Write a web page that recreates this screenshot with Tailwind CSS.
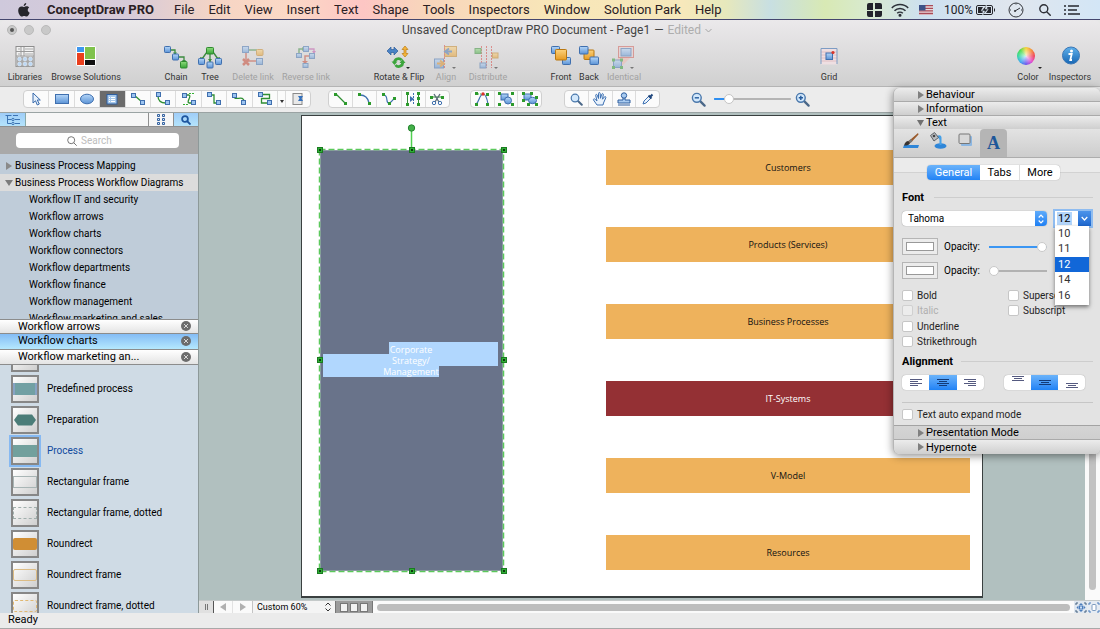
<!DOCTYPE html>
<html lang="en">
<head>
    <meta charset="UTF-8">
    <meta name="viewport" content="width=device-width, initial-scale=1.0">
    <title>ConceptDraw PRO</title>
    <script src="https://cdn.jsdelivr.net/npm/@tailwindcss/browser@4"></script>
</head>
<body class="h-screen flex flex-col overflow-hidden bg-[#e8e8e8] font-['Roboto',sans-serif] text-black">

    <!-- Shared gradients and symbols -->
    <svg class="w-0 h-0 shrink-0" aria-hidden="true">
        <defs>
            <linearGradient id="blue" x1="0" y1="0" x2="0" y2="1"><stop offset="0" stop-color="#b5d6f8"/><stop offset="1" stop-color="#5b93d6"/></linearGradient>
            <linearGradient id="orange" x1="0" y1="0" x2="0" y2="1"><stop offset="0" stop-color="#fcd27c"/><stop offset="1" stop-color="#e69a22"/></linearGradient>
            <linearGradient id="green" x1="0" y1="0" x2="0" y2="1"><stop offset="0" stop-color="#8edc7c"/><stop offset="1" stop-color="#36a336"/></linearGradient>
            <linearGradient id="info" x1="0" y1="0" x2="0" y2="1"><stop offset="0" stop-color="#5fb0ea"/><stop offset="1" stop-color="#1766b4"/></linearGradient>
        </defs>
        <symbol id="node" viewBox="0 0 5 5"><rect x=".5" y=".5" width="4" height="4" fill="#9cc4f0" stroke="#3f6fae"/></symbol>
        <symbol id="dot" viewBox="0 0 4 4"><rect width="4" height="4" fill="#2c9a2c"/></symbol>
        <symbol id="close" viewBox="0 0 10 10"><circle cx="5" cy="5" r="5" fill="#6c6c6c"/><path d="M3 3l4 4M7 3L3 7" stroke="#d6d6d6" stroke-width="1"/></symbol>
        <symbol id="magnifier" viewBox="0 0 16 16"><path d="M9.500 9.500l5 5" stroke="#4a6788" stroke-width="2.400" stroke-linecap="round"/><circle cx="6.200" cy="6.200" r="4.700" fill="#d3e8fb" stroke="#4a78ac" stroke-width="1.500"/></symbol>
    </svg>

    <!-- Menu bar -->
    <header class="h-5 shrink-0 flex items-center pl-[18px] pr-5 text-[13px] leading-5 border-b border-[#44466e] bg-[linear-gradient(90deg,#cfc9dc_0%,#d8cbd8_12%,#f6d5c4_20%,#fbd9c6_26%,#fdc6c4_33%,#f8d4bc_38%,#f8e6b8_50%,#f7e8bb_62%,#e6e8bc_66%,#c8dfe2_70%,#d8e9b4_75%,#d8ead0_79%,#cde0f0_84%,#e0e6ee_92%,#d3e6f6_100%)]">
        <svg class="w-3 h-[14px] mr-[17px]" viewBox="0 0 12 14" fill="#26262c"><path d="M8.200 0c.1 1.600-1 3-2.500 3.100C5.500 1.700 6.700.200 8.200 0zM6.200 4c.6 0 1.300-.7 2.500-.7 1 0 1.900.5 2.500 1.300-2.100 1.300-1.800 4.200.5 5.100-.5 1.500-1.800 3.900-3.200 3.900-.9 0-1.300-.6-2.300-.6s-1.500.6-2.300.6C2.100 13.600.2 10.300.2 7.500c0-2.600 1.600-4.100 3.300-4.100 1.200 0 2 .6 2.700.6z"/></svg>
        <nav class="flex gap-[14px] text-[#2a2024]">
            <a href="#" class="font-bold mr-[6px]">ConceptDraw PRO</a>
            <a href="#">File</a>
            <a href="#">Edit</a>
            <a href="#">View</a>
            <a href="#">Insert</a>
            <a href="#">Text</a>
            <a href="#">Shape</a>
            <a href="#">Tools</a>
            <a href="#">Inspectors</a>
            <a href="#">Window</a>
            <a href="#">Solution Park</a>
            <a href="#">Help</a>
        </nav>
        <div class="ml-auto flex items-center text-[#222228] text-xs">
            <svg class="w-[15px] h-[14px] mr-[9px]" viewBox="0 0 15 14" fill="#22232b"><path d="M2 0h4v7H0V2a2 2 0 0 1 2-2zM8 0h5a2 2 0 0 1 2 2v4H8zM0 8h6v6H2a2 2 0 0 1-2-2zM8 8h7v4a2 2 0 0 1-2 2H8z"/></svg>
            <svg class="w-[18px] h-[14px] mr-[10px]" viewBox="0 0 18 14" fill="none" stroke="#2b3038" stroke-width="1.500"><path d="M.8 5a11.500 11.500 0 0 1 16.400 0M3.500 7.700a7.700 7.700 0 0 1 11 0M6.200 10.300a4 4 0 0 1 5.600 0"/><circle cx="9" cy="12.200" r=".8" fill="#2b3038"/></svg>
            <svg class="w-[14px] h-[10px] mr-[11px]" viewBox="0 0 14 10"><rect width="14" height="10" fill="#e8d8dc"/><path d="M0 .7h14M0 3.300h14M0 5.900h14M0 8.500h14" stroke="#a94b58" stroke-width="1.300"/><rect width="6.500" height="5.500" fill="#3d5288"/></svg>
            <span class="mr-[3px]">100%</span>
            <svg class="w-5 h-[10px] mr-3" viewBox="0 0 20 10"><rect x=".5" y=".5" width="16" height="9" rx="1.500" fill="none" stroke="#26272d"/><path d="M18 3.500h1v3h-1z" fill="#26272d"/><path d="M2 2h5L5 5.500h2L6.500 8H2zM15 2v6h-5l2.200-3.500H10.500L11.500 2z" fill="#26272d"/><path d="M10.500 0L5.500 6h3L6.500 10l5.800-6h-3z" fill="#26272d" stroke="#d8e4ee" stroke-width=".6"/></svg>
            <svg class="w-4 h-4 mr-[15px]" viewBox="0 0 16 16" fill="none" stroke="#33363c"><circle cx="8" cy="8" r="7"/><path d="M7 9l5-3M8 1.500v1M2 8h1M13 8h1"/><circle cx="7" cy="9" r=".7"/></svg>
            <svg class="w-3 h-3 mr-[13px]" viewBox="0 0 12 12" fill="none" stroke="#2c2f36" stroke-width="1.400"><circle cx="4.800" cy="4.800" r="4"/><path d="M7.700 7.700l4 4"/></svg>
            <svg class="w-4 h-[10px]" viewBox="0 0 16 10" stroke="#26282f" stroke-width="1.500"><path d="M0 1h2M4 1h11M0 5h2M4 5h9M0 9h2M4 9h12"/></svg>
        </div>
    </header>

    <!-- Title and main toolbar -->
    <section class="shrink-0 h-[67px] rounded-t-md bg-linear-to-b from-[#ebe9eb] to-[#d0d0d0] border-b border-[#b4b4b4]">
        <div class="h-5 flex items-center px-[7px]">
            <div class="flex gap-[7px]">
                <button aria-label="Close" class="w-[10px] h-[10px] rounded-full bg-[#c9c9c9] border border-[#b5b5b5] flex items-center justify-center"><span class="w-1 h-1 rounded-full bg-[#555]"></span></button>
                <button aria-label="Minimize" class="w-[10px] h-[10px] rounded-full bg-[#c9c9c9] border border-[#bababa]"></button>
                <button aria-label="Zoom" class="w-[10px] h-[10px] rounded-full bg-[#c9c9c9] border border-[#bababa]"></button>
            </div>
            <h1 class="flex-1 pr-[30px] text-xs text-[#444] flex justify-center items-center gap-1">
                <span>Unsaved ConceptDraw PRO Document - Page1</span><span>—</span><span class="text-[#adadad]">Edited</span>
                <svg class="w-[7px] h-[5px]" viewBox="0 0 7 5" fill="none" stroke="#a5a5a5"><path d="M.5 1l3 3 3-3"/></svg>
            </h1>
        </div>
        <div class="flex items-start h-[46px] pt-[5px] pl-[2px] pr-[6px] text-[9px] text-[#333] text-center leading-3 whitespace-nowrap">
            <button class="w-[46px] flex flex-col items-center gap-[2px]">
                <svg class="w-7 h-6" viewBox="0 0 28 24"><rect x="5" y="1.500" width="18" height="20" fill="#f2f2f2" stroke="#8d8d8d"/><path d="M5 6.500h18M5 11h18M10 2v9M13 2v9" stroke="#999"/><path d="M7 4h2M7 9h2M14 4h8M14 9h8" stroke="#aaa"/><rect x="5.500" y="11.500" width="17" height="10" fill="#a9a9a9"/><g fill="#bcd8f4" stroke="#eaf3fc" stroke-width=".5"><circle cx="8.500" cy="14" r="1.900"/><circle cx="14" cy="14" r="1.900"/><circle cx="19.500" cy="14" r="1.900"/><circle cx="8.500" cy="19" r="1.900"/><circle cx="14" cy="19" r="1.900"/><circle cx="19.500" cy="19" r="1.900"/></g></svg>
                <span>Libraries</span>
            </button>
            <button class="w-[76px] flex flex-col items-center gap-[2px]">
                <svg class="w-7 h-6" viewBox="0 0 28 24"><rect x="4" y="1" width="20" height="20" rx="2" fill="#fff"/><path d="M5 2h7v5H5z" fill="#3f97ee"/><path d="M5 8h7v12H5z" fill="#ea3f1d"/><path d="M13 2h10v12H13z" fill="#7fc24c"/><path d="M13 15h10v5H13z" fill="#111"/></svg>
                <span>Browse Solutions</span>
            </button>
            <button class="w-9 ml-[34px] flex flex-col items-center gap-[2px]">
                <svg class="w-7 h-6" viewBox="0 0 28 24"><g fill="none" stroke="#3b8b3f" stroke-width="1.300"><path d="M9 5h4v4M17 12h5v5"/></g><path d="M11 7.500h4l-2 2.500zM20 15h4l-2 2.500z" fill="#3b8b3f"/><g stroke="#3f6fae"><rect x="2.500" y="1.500" width="6" height="6" rx=".8" fill="url(#blue)"/><rect x="10.500" y="9" width="6" height="6" rx=".8" fill="url(#blue)"/></g><rect x="18.500" y="16.500" width="6.500" height="6.500" rx=".8" fill="url(#green)" stroke="#2f8a2f"/></svg>
                <span>Chain</span>
            </button>
            <button class="w-8 flex flex-col items-center gap-[2px]">
                <svg class="w-7 h-6" viewBox="0 0 28 24"><path d="M11 7l-5 7M17 7l5 7M14 9v8" stroke="#3b8b3f" stroke-width="1.300"/><path d="M4 12l4 1-3 3zM24 12l-4 1 3 3zM12 14h4l-2 3z" fill="#3b8b3f"/><rect x="10.500" y="2.500" width="7" height="6.500" rx=".8" fill="url(#green)" stroke="#2f8a2f"/><g stroke="#3f6fae" fill="url(#blue)"><rect x="2.500" y="13.500" width="6" height="6" rx=".8"/><rect x="19.500" y="13.500" width="6" height="6" rx=".8"/><rect x="11" y="17" width="6" height="6" rx=".8"/></g></svg>
                <span>Tree</span>
            </button>
            <button class="w-[54px] flex flex-col items-center gap-[2px] text-[#a2a2a2]">
                <svg class="w-7 h-6 opacity-50" viewBox="0 0 28 24"><path d="M10 5h8" stroke="#3b8b3f" stroke-width="1.500"/><path d="M7 8v8h11" stroke="#c64a35" stroke-width="1.500" fill="none"/><path d="M4 14l6 6M10 14l-6 6" stroke="#c8412a" stroke-width="2.500"/><g stroke="#3f6fae" fill="url(#blue)"><rect x="3.500" y="1.500" width="6" height="6"/><rect x="17.500" y="13.500" width="6" height="6"/></g><rect x="17.500" y="4.500" width="6.500" height="6" rx="1" fill="url(#orange)" stroke="#c4821d"/></svg>
                <span>Delete link</span>
            </button>
            <button class="w-[52px] flex flex-col items-center gap-[2px] text-[#a2a2a2]">
                <svg class="w-7 h-6 opacity-50" viewBox="0 0 28 24"><path d="M7 8V4h4" stroke="#3b8b3f" stroke-width="1.500" fill="none"/><path d="M10 2l3 2-3 2z" fill="#3b8b3f"/><path d="M17 4h5v3" stroke="#c050a8" stroke-width="1.300" fill="none"/><path d="M20 6h4l-2 3z" fill="#c050a8"/><path d="M18 11h-5v8" stroke="#c64a35" stroke-width="1.500" fill="none"/><path d="M10 16h6l-3 3z" fill="#c8412a"/><g stroke="#3f6fae" fill="url(#blue)"><rect x="11.500" y="1.500" width="5" height="5"/><rect x="4.500" y="8.500" width="5" height="4"/><rect x="17.500" y="8.500" width="5" height="5"/><rect x="11" y="18.500" width="5" height="4"/></g></svg>
                <span>Reverse link</span>
            </button>
            <button class="w-[54px] ml-10 flex flex-col items-center gap-[2px]">
                <svg class="w-7 h-6" viewBox="0 0 28 24"><path d="M2 6l4-4v2.500h3V2l4 4-4 4V7.500H6V10z" fill="#4a83c6" stroke="#2c5c9a" stroke-width=".7"/><path d="M20 1l3 3.500h-2v4h2L20 12l-3-3.500h2v-4h-2z" fill="#f5b53c" stroke="#bb7c14" stroke-width=".7"/><path d="M9.500 18a4 4 0 0 1 7-3M17.500 16.500a4 4 0 0 1-7 3.500" fill="none" stroke="#3ca53c" stroke-width="2.800"/><path d="M6.500 16.500h6L9.500 20zM14.500 18h6l-3-4z" fill="#3ca53c"/><path d="M21 22h4l-2 2z" fill="#222"/></svg>
                <span>Rotate &amp; Flip</span>
            </button>
            <button class="w-10 flex flex-col items-center gap-[2px] text-[#a2a2a2]">
                <svg class="w-7 h-6" viewBox="0 0 28 24"><g opacity=".5"><rect x="12.500" y="1.500" width="12" height="10" fill="url(#orange)" stroke="#c4821d"/><rect x="2.500" y="14" width="9" height="9" fill="url(#blue)" stroke="#3f6fae"/><path d="M12.500 0v24" stroke="#d8403a" stroke-dasharray="2 1"/><path d="M20 6.500h-6m3-3l-4 3 4 3" stroke="#3f6fae" stroke-width="1.800" fill="none"/><path d="M5 18.500h6m-3-3l4 3-4 3" stroke="#e08a18" stroke-width="1.800" fill="none"/></g><path d="M20 22h4l-2 2z" fill="#777"/></svg>
                <span>Align</span>
            </button>
            <button class="w-11 flex flex-col items-center gap-[2px] text-[#a2a2a2]">
                <svg class="w-7 h-6" viewBox="0 0 28 24"><g opacity=".5"><path d="M7.500 1v22M12.500 1v22M17.500 1v22" stroke="#d8403a" stroke-dasharray="2 1"/><rect x="1" y="3.500" width="6" height="5" fill="url(#green)" stroke="#2f8a2f"/><rect x="18.500" y="8" width="5.500" height="5" fill="url(#orange)" stroke="#c4821d"/><rect x="6" y="18" width="6" height="5" fill="url(#blue)" stroke="#3f6fae"/></g><path d="M20 22h4l-2 2z" fill="#777"/></svg>
                <span>Distribute</span>
            </button>
            <button class="w-8 ml-[35px] flex flex-col items-center gap-[2px]">
                <svg class="w-7 h-6" viewBox="0 0 28 24"><g fill="url(#blue)" stroke="#3f6fae"><rect x="4.500" y="1.500" width="8" height="7" rx=".8"/><rect x="15.500" y="12.500" width="8" height="7" rx=".8"/></g><rect x="8.500" y="4.500" width="11" height="10.500" rx=".8" fill="url(#orange)" stroke="#b9770f"/></svg>
                <span>Front</span>
            </button>
            <button class="w-6 flex flex-col items-center gap-[2px]">
                <svg class="w-6 h-6" viewBox="2 0 24 24"><rect x="9" y="5" width="10" height="9.500" rx=".8" fill="url(#orange)" stroke="#b9770f"/><g fill="url(#blue)" stroke="#3f6fae"><rect x="4.500" y="1.500" width="8.500" height="7.500" rx=".8"/><rect x="15" y="12" width="8.500" height="7.500" rx=".8"/></g></svg>
                <span>Back</span>
            </button>
            <button class="w-[46px] flex flex-col items-center gap-[2px] text-[#a2a2a2]">
                <svg class="w-7 h-6" viewBox="0 0 28 24"><g opacity=".5"><path d="M9 12L5 17v4h7l9-9z" fill="#f4b8ac"/><rect x="8.500" y="1.500" width="15" height="11" fill="#e8cfd0" stroke="#d05a52"/><rect x="11" y="3.500" width="10" height="7.500" fill="url(#blue)" stroke="#3f6fae"/><rect x="3.500" y="15" width="8" height="7.500" fill="url(#blue)" stroke="#3f6fae"/><path d="M2 13.500h3v3H2zM10 13.500h3v3h-3zM2 21h3v3H2zM10 21h3v3h-3z" fill="#2c9a2c"/></g><path d="M20 22h4l-2 2z" fill="#777"/></svg>
                <span>Identical</span>
            </button>
            <button class="w-10 ml-[162px] flex flex-col items-center gap-[2px]">
                <svg class="w-7 h-6" viewBox="0 0 28 24"><path d="M6 3.500h16v16H6z" fill="#eedfe2"/><path d="M6 7h16M6 10h16M6 13h16M6 16h16" stroke="#dcb5bb" stroke-width=".8"/><path d="M6 19V3.500h16V19" fill="none" stroke="#7d9cc4"/><rect x="11" y="8" width="6.500" height="6.500" fill="url(#blue)" stroke="#3f6fae"/><circle cx="18" cy="7.500" r="1.600" fill="#d8352b"/></svg>
                <span>Grid</span>
            </button>
            <button class="w-9 ml-auto flex flex-col items-center gap-[2px]">
                <span class="relative w-7 h-6 flex items-start justify-center pt-[2px] pr-1">
                    <span class="w-[18px] h-[18px] rounded-full bg-[radial-gradient(circle,#ffffffcc_0%,#ffffff00_65%),conic-gradient(#f7d23a,#f58a3a,#f0455a,#e24fd0,#6a58ee,#3fa9f0,#35d8a0,#4ddc4a,#f7d23a)]"></span>
                    <svg class="absolute right-0 bottom-0 w-1 h-[2px]" viewBox="0 0 4 2"><path d="M0 0h4L2 2z" fill="#222"/></svg>
                </span>
                <span>Color</span>
            </button>
            <button class="w-12 flex flex-col items-center gap-[2px]">
                <svg class="w-7 h-6" viewBox="0 0 28 24"><circle cx="15" cy="10.500" r="8.500" fill="url(#info)" stroke="#3b77b6"/><circle cx="15.500" cy="6" r="1.500" fill="#fff"/><path d="M12.500 9h3.200L14.300 15h1.700" fill="none" stroke="#fff" stroke-width="1.800"/></svg>
                <span>Inspectors</span>
            </button>
        </div>
    </section>

    <!-- Tool palettes -->
    <section class="shrink-0 h-[26px] flex items-center pl-[23px] pb-[1px] bg-[#ececec] border-b border-[#9aa3a3]">
        <div class="w-[288px] h-[18px] flex rounded bg-[#fbfbfb] border border-[#d0d0d0] divide-x divide-[#dcdcdc]">
            <button aria-label="Select" class="flex-1 flex items-center justify-center"><svg class="w-4 h-4" viewBox="0 0 16 16"><path d="M5 2v10l2.500-2.200L9.300 14l2-1-2-4h3z" fill="#e8f1fb" stroke="#3769ab"/></svg></button>
            <button aria-label="Rectangle" class="flex-1 flex items-center justify-center"><svg class="w-4 h-4" viewBox="0 0 16 16"><rect x="1.500" y="3.500" width="13" height="9" fill="url(#blue)" stroke="#3f6fae"/></svg></button>
            <button aria-label="Ellipse" class="flex-1 flex items-center justify-center"><svg class="w-4 h-4" viewBox="0 0 16 16"><ellipse cx="8" cy="8" rx="6.500" ry="4.800" fill="url(#blue)" stroke="#3f6fae"/></svg></button>
            <button aria-label="Text" class="flex-1 flex items-center justify-center bg-[#6b6b6b]"><svg class="w-4 h-4" viewBox="0 0 16 16"><rect x="3" y="3.500" width="10" height="9.500" fill="#a5c8ec" stroke="#2f5f9f"/><path d="M5 6.500h1M7 6.500h4M5 8.500h1M7 8.500h4M5 10.500h1M7 10.500h4" stroke="#fff"/></svg></button>
            <button aria-label="Direct connector" class="flex-1 flex items-center justify-center"><svg class="w-4 h-4" viewBox="0 0 16 16"><path d="M4 4l8 7" stroke="#2f8f33" stroke-width="1.300"/><use href="#node" x="1" y="2" width="5" height="5"/><use href="#node" x="10" y="9" width="5" height="5"/></svg></button>
            <button aria-label="Arc connector" class="flex-1 flex items-center justify-center"><svg class="w-4 h-4" viewBox="0 0 16 16"><path d="M3 5c0 5 3 7 8 7" fill="none" stroke="#2f8f33" stroke-width="1.300"/><use href="#node" x="1" y="1" width="5" height="5"/><use href="#node" x="10" y="9" width="5" height="5"/></svg></button>
            <button aria-label="Bezier connector" class="flex-1 flex items-center justify-center"><svg class="w-4 h-4" viewBox="0 0 16 16"><path d="M4 4h4c3 1-3 7 0 8h4" fill="none" stroke="#2f8f33" stroke-width="1.300"/><path d="M8 2.500h6M2 13.500h6" stroke="#35b035" stroke-dasharray="2 1"/><use href="#node" x="1" y="2" width="5" height="5"/><use href="#node" x="10" y="9" width="5" height="5"/></svg></button>
            <button aria-label="Smart connector" class="flex-1 flex items-center justify-center"><svg class="w-4 h-4" viewBox="0 0 16 16"><path d="M4 4h4v8h4" fill="none" stroke="#2f8f33" stroke-width="1.300"/><use href="#node" x="1" y="1" width="5" height="5"/><use href="#node" x="10" y="9" width="5" height="5"/></svg></button>
            <button aria-label="Round connector" class="flex-1 flex items-center justify-center"><svg class="w-4 h-4" viewBox="0 0 16 16"><path d="M3 5c0 6 10-2 10 6" fill="none" stroke="#2f8f33" stroke-width="1.300"/><use href="#node" x="1" y="2" width="5" height="5"/><use href="#node" x="10" y="9" width="5" height="5"/></svg></button>
            <button aria-label="Chain connector" class="flex-1 flex items-center justify-center"><svg class="w-4 h-4" viewBox="0 0 16 16"><path d="M4 3.500h8.500v4h-8v4.500h8" fill="none" stroke="#2f8f33" stroke-width="1.300"/><use href="#node" x="1" y="1" width="5" height="5"/><use href="#node" x="10" y="9" width="5" height="5"/></svg></button>
            <button aria-label="More connectors" class="w-2 flex items-end justify-center pb-1"><svg class="w-1 h-[3px]" viewBox="0 0 4 3"><path d="M0 0h4L2 3z" fill="#333"/></svg></button>
            <button aria-label="Insert" class="w-6 flex items-center justify-center"><svg class="w-4 h-4" viewBox="0 0 16 16"><rect x="3" y="2.500" width="9" height="11" fill="#e9e9e9" stroke="#8a8a8a"/><path d="M8 5h5l-1.500 2.500L13 10H8l1.500-2.500z" fill="#3270bd"/></svg></button>
        </div>
        <div class="w-[122px] ml-[17px] h-[18px] flex rounded bg-[#fbfbfb] border border-[#d0d0d0] divide-x divide-[#dcdcdc]">
            <button aria-label="Line" class="flex-1 flex items-center justify-center"><svg class="w-4 h-4" viewBox="0 0 16 16"><path d="M3 3l9 9" stroke="#2f8f33" stroke-width="1.300"/><use href="#dot" x="1" y="2" width="3" height="3"/><use href="#dot" x="11" y="11" width="3" height="3"/></svg></button>
            <button aria-label="Arc" class="flex-1 flex items-center justify-center"><svg class="w-4 h-4" viewBox="0 0 16 16"><path d="M3 4c5 0 8 3 9 8" fill="none" stroke="#3d6fae" stroke-width="1.300"/><use href="#dot" x="1" y="2" width="3" height="3"/><use href="#dot" x="11" y="11" width="3" height="3"/></svg></button>
            <button aria-label="Spline" class="flex-1 flex items-center justify-center"><svg class="w-4 h-4" viewBox="0 0 16 16"><path d="M3 4c5 1 1 8 5 8 2 0 3-3 5-4" fill="none" stroke="#3d6fae" stroke-width="1.200"/><use href="#dot" x="1" y="2" width="3" height="3"/><use href="#dot" x="7" y="11" width="3" height="3"/><use href="#dot" x="12" y="6" width="3" height="3"/></svg></button>
            <button aria-label="Mirror" class="flex-1 flex items-center justify-center"><svg class="w-4 h-4" viewBox="0 0 16 16"><path d="M2.500 3v10M13.500 3v10" stroke="#2f8f33"/><path d="M8.500 2v12" stroke="#3d6fae" stroke-dasharray="2 1"/><path d="M5 5l4 3-4 3z" fill="#3d6fae"/><use href="#dot" x="1" y="1" width="3" height="3"/><use href="#dot" x="1" y="12" width="3" height="3"/><use href="#dot" x="12" y="1" width="3" height="3"/><use href="#dot" x="12" y="6" width="3" height="3"/><use href="#dot" x="12" y="12" width="3" height="3"/></svg></button>
            <button aria-label="Cut" class="flex-1 flex items-center justify-center"><svg class="w-4 h-4" viewBox="0 0 16 16"><path d="M1 6h14" stroke="#2f8f33"/><path d="M5 3l5 8M11 3l-5 8" stroke="#5a6a78" stroke-width="1.300"/><g fill="none" stroke="#3d6fae"><circle cx="5" cy="12" r="1.700"/><circle cx="11" cy="12" r="1.700"/></g><use href="#dot" x="1" y="5" width="3" height="3"/><use href="#dot" x="12" y="5" width="3" height="3"/></svg></button>
        </div>
        <div class="w-[72px] ml-5 h-[18px] flex rounded bg-[#fbfbfb] border border-[#d0d0d0] divide-x divide-[#dcdcdc]">
            <button aria-label="Edit points" class="flex-1 flex items-center justify-center"><svg class="w-4 h-4" viewBox="0 0 16 16"><path d="M2 13C5 12 5 4 9 3c3 0 4 4 5 10" fill="none" stroke="#3d6fae" stroke-width="1.200"/><path d="M2 3h6" stroke="#35b035" stroke-dasharray="1 1"/><circle cx="9" cy="3" r="1.700" fill="#d8352b"/><use href="#dot" x="1" y="1" width="3" height="3"/><use href="#dot" x="1" y="12" width="3" height="3"/><use href="#dot" x="12" y="2" width="3" height="3"/><use href="#dot" x="12" y="12" width="3" height="3"/></svg></button>
            <button aria-label="Group" class="flex-1 flex items-center justify-center"><svg class="w-4 h-4" viewBox="0 0 16 16"><rect x="3" y="3" width="7" height="6" fill="url(#blue)" stroke="#3f6fae"/><circle cx="10" cy="9.500" r="3.500" fill="url(#blue)" stroke="#3f6fae"/><use href="#dot" x="0" y="1" width="3" height="3"/><use href="#dot" x="13" y="1" width="3" height="3"/><use href="#dot" x="0" y="12" width="3" height="3"/><use href="#dot" x="13" y="12" width="3" height="3"/></svg></button>
            <button aria-label="Ungroup" class="flex-1 flex items-center justify-center"><svg class="w-4 h-4" viewBox="0 0 16 16"><rect x="2" y="3" width="7" height="6" fill="url(#blue)" stroke="#3f6fae"/><ellipse cx="10.500" cy="9.500" rx="4" ry="3.200" fill="url(#blue)" stroke="#3f6fae"/><use href="#dot" x="0" y="1" width="3" height="3"/><use href="#dot" x="8" y="1" width="3" height="3"/><use href="#dot" x="0" y="8" width="3" height="3"/><use href="#dot" x="13" y="5" width="3" height="3"/><use href="#dot" x="5" y="12" width="3" height="3"/><use href="#dot" x="13" y="12" width="3" height="3"/></svg></button>
        </div>
        <div class="w-24 ml-[22px] h-[18px] flex rounded bg-[#fbfbfb] border border-[#d0d0d0] divide-x divide-[#dcdcdc]">
            <button aria-label="Zoom" class="flex-1 flex items-center justify-center"><svg class="w-[13px] h-[13px]"><use href="#magnifier"/></svg></button>
            <button aria-label="Pan" class="flex-1 flex items-center justify-center"><svg class="w-4 h-4" viewBox="0 0 16 16"><path d="M5 14L1.500 9c-.5-1 1-1.600 1.700-.7L5 10 3.700 4.500c-.2-1.300 1.200-1.500 1.600-.3L6.500 7.500V2.500c0-1.300 1.600-1.300 1.700 0l.3 4.800 1.200-4c.4-1.200 1.900-.8 1.600.4l-.8 4.500L12.300 6c.7-1 2-.3 1.500.8L11.500 12l-.5 2z" fill="#e9f2fc" stroke="#3c70b2"/></svg></button>
            <button aria-label="Stamp" class="flex-1 flex items-center justify-center"><svg class="w-4 h-4" viewBox="0 0 16 16"><path d="M7 6.500h2v2.500h5v3H2V9h5z" fill="#a9cbf0" stroke="#2f5f9f"/><circle cx="8" cy="4.500" r="2.700" fill="#a9cbf0" stroke="#2f5f9f"/><path d="M2 14h12" stroke="#2f5f9f"/></svg></button>
            <button aria-label="Eyedropper" class="flex-1 flex items-center justify-center"><svg class="w-4 h-4" viewBox="0 0 16 16"><path d="M3 13l1-3 5-5 2 2-5 5z" fill="#eaf3fc" stroke="#3c70b2"/><path d="M8.500 4.500l3 3M10 6l2.500-2.500" stroke="#1f467c" stroke-width="2"/></svg></button>
        </div>
        <button aria-label="Zoom out" class="ml-[31px]"><svg class="w-[15px] h-[15px]" viewBox="0 0 16 16"><use href="#magnifier"/><path d="M4 6.200h4.500" stroke="#245a9c" stroke-width="1.500"/></svg></button>
        <input type="range" aria-label="Zoom" value="15" class="ml-2 mr-1 w-[77px] h-3 appearance-none rounded-full bg-[linear-gradient(90deg,#2e8ef0_15%,#b5b5b5_15%)] bg-[length:100%_2px] bg-center bg-no-repeat [&::-webkit-slider-thumb]:appearance-none [&::-webkit-slider-thumb]:w-[10px] [&::-webkit-slider-thumb]:h-[10px] [&::-webkit-slider-thumb]:rounded-full [&::-webkit-slider-thumb]:bg-white [&::-webkit-slider-thumb]:border [&::-webkit-slider-thumb]:border-[#c4c4c4]">
        <button aria-label="Zoom in"><svg class="w-[15px] h-[15px]" viewBox="0 0 16 16"><use href="#magnifier"/><path d="M4 6.200h4.500M6.200 4v4.500" stroke="#245a9c" stroke-width="1.500"/></svg></button>
    </section>

    <main class="flex-1 min-h-0 flex">
        <!-- Library sidebar -->
        <aside class="w-[199px] shrink-0 flex flex-col border-r border-[#8d9999] bg-[#cfdbe5]">
            <div class="h-[14px] shrink-0 flex border-b border-[#8f8f8f] bg-[#f6f6f6]">
                <button aria-label="Library tree" class="w-[26px] bg-linear-to-b from-[#9fcdf8] to-[#b4e3fb] border-r border-[#8aa] flex items-center justify-center"><svg class="w-4 h-3" viewBox="0 0 16 12" fill="none" stroke="#3d74b4"><path d="M.5 1.500h6M2.500 1.500v8h4M2.500 5.500h4"/><circle cx="8" cy="5.500" r="1.200"/><circle cx="8" cy="9.500" r="1.200"/><path d="M10 5.500h5M10 9.500h5M8 1.500h5"/></svg></button>
                <div class="flex-1"></div>
                <button aria-label="Grid view" class="w-[26px] border-x border-[#8f8f8f] flex items-center justify-center"><svg class="w-[10px] h-[11px]" viewBox="0 0 10 11" fill="#dcebfa" stroke="#33619f"><path d="M1.500 .5h2v2h-2zM6.500 .5h2v2h-2zM1.500 4.500h2v2h-2zM6.500 4.500h2v2h-2zM1.500 8.500h2v2h-2zM6.500 8.500h2v2h-2z"/></svg></button>
                <button aria-label="Search libraries" class="w-6 bg-linear-to-b from-[#9fcdf8] to-[#b4e3fb] flex items-center justify-center"><svg class="w-[10px] h-[10px]" viewBox="0 0 10 10" fill="none" stroke="#1d559f" stroke-width="1.800"><circle cx="4" cy="4" r="2.900"/><path d="M6 6l3.500 3.500"/></svg></button>
            </div>
            <div class="h-[27px] shrink-0 bg-[#a9a9a9] px-4 pt-[6px]">
                <label class="h-[15px] w-[163px] bg-white rounded-sm flex items-center pl-[51px] gap-1 text-[10px]">
                    <svg class="w-[10px] h-[10px] shrink-0" viewBox="0 0 10 10" fill="none" stroke="#777"><circle cx="4.200" cy="4.200" r="3.500"/><path d="M6.700 6.700l3 3"/></svg>
                    <input type="search" aria-label="Search" placeholder="Search" class="w-20 h-3 outline-none placeholder:text-[#bdbdbd]">
                </label>
            </div>
            <ul class="h-[165px] shrink-0 overflow-hidden pt-[3px] bg-[#bfccd9] text-[10px] leading-[17px] whitespace-nowrap">
                <li class="flex items-center gap-[3px] pl-[6px]"><svg class="w-[6px] h-2" viewBox="0 0 6 8"><path d="M0 0l6 4-6 4z" fill="#8a8a8a"/></svg>Business Process Mapping</li>
                <li class="flex items-center gap-[2px] pl-[5px] bg-[#dcdcdc]"><svg class="w-2 h-[6px]" viewBox="0 0 8 6"><path d="M0 0h8L4 6z" fill="#7c7c7c"/></svg>Business Process Workflow Diagrams</li>
                <li class="pl-[29px]">Workflow IT and security</li>
                <li class="pl-[29px]">Workflow arrows</li>
                <li class="pl-[29px]">Workflow charts</li>
                <li class="pl-[29px]">Workflow connectors</li>
                <li class="pl-[29px]">Workflow departments</li>
                <li class="pl-[29px]">Workflow finance</li>
                <li class="pl-[29px]">Workflow management</li>
                <li class="pl-[29px]">Workflow marketing and sales</li>
            </ul>
            <ul class="shrink-0 text-[11px] leading-[13px] border-t border-[#8c8c8c]">
                <li class="h-[14px] pl-[18px] pr-[7px] pb-px flex items-center justify-between border-b border-[#8c8c8c] bg-linear-to-b from-white to-[#e4e4e4]">Workflow arrows<button aria-label="Close Workflow arrows"><svg class="w-[10px] h-[10px]"><use href="#close"/></svg></button></li>
                <li class="h-4 pl-[18px] pr-[7px] pb-[2px] flex items-center justify-between border-b border-[#8c8c8c] bg-linear-to-b from-[#84bcf5] to-[#b5e8fd]">Workflow charts<button aria-label="Close Workflow charts"><svg class="w-[10px] h-[10px]"><use href="#close"/></svg></button></li>
                <li class="h-[15px] pl-[18px] pr-[7px] pb-px flex items-center justify-between border-b border-[#8c8c8c] bg-linear-to-b from-white to-[#e4e4e4]">Workflow marketing an...<button aria-label="Close Workflow marketing"><svg class="w-[10px] h-[10px]"><use href="#close"/></svg></button></li>
            </ul>
            <div class="flex-1 min-h-0 overflow-hidden">
                <ul class="-mt-[23px] pl-[11px] text-[10px]">
                    <li class="h-[31px] flex items-center gap-2"><span class="w-7 h-7 border-2 border-[#878787] bg-linear-to-br from-white to-[#cfcfcf]"></span></li>
                    <li class="h-[31px] flex items-center gap-2"><span class="w-7 h-7 border-2 border-[#878787] bg-linear-to-br from-white to-[#cfcfcf] flex items-center"><span class="w-6 h-3 bg-[#72a0a3] border-x-2 border-[#87a3c4]"></span></span>Predefined process</li>
                    <li class="h-[31px] flex items-center gap-2"><span class="w-7 h-7 border-2 border-[#878787] bg-linear-to-br from-white to-[#cfcfcf] flex items-center"><svg class="w-6 h-3" viewBox="0 0 24 12"><path d="M1 6l4-5.500h14L23 6l-4 5.500H5z" fill="#4c7d78"/></svg></span>Preparation</li>
                    <li class="h-[31px] flex items-center gap-2 text-[#114a9e]"><span class="w-7 h-7 border-2 border-[#878787] bg-linear-to-br from-white to-[#cfcfcf] flex items-center outline-2 outline-[#86b9f2]"><span class="w-6 h-3 bg-[#72a09d]"></span></span>Process</li>
                    <li class="h-[31px] flex items-center gap-2"><span class="w-7 h-7 border-2 border-[#878787] bg-linear-to-br from-white to-[#cfcfcf] flex items-center"><span class="w-6 h-3 border border-[#a8b5b5]"></span></span>Rectangular frame</li>
                    <li class="h-[31px] flex items-center gap-2"><span class="w-7 h-7 border-2 border-[#878787] bg-linear-to-br from-white to-[#cfcfcf] flex items-center"><span class="w-6 h-3 border border-dashed border-[#a0afac]"></span></span>Rectangular frame, dotted</li>
                    <li class="h-[31px] flex items-center gap-2"><span class="w-7 h-7 border-2 border-[#878787] bg-linear-to-br from-white to-[#cfcfcf] flex items-center"><span class="w-6 h-3 rounded-xs bg-[#d08e34]"></span></span>Roundrect</li>
                    <li class="h-[31px] flex items-center gap-2"><span class="w-7 h-7 border-2 border-[#878787] bg-linear-to-br from-white to-[#cfcfcf] flex items-center"><span class="w-6 h-3 rounded-xs border border-[#dcbc85]"></span></span>Roundrect frame</li>
                    <li class="h-[31px] flex items-center gap-2"><span class="w-7 h-7 border-2 border-[#878787] bg-linear-to-br from-white to-[#cfcfcf] flex items-center"><span class="w-6 h-3 rounded-xs border border-dashed border-[#e0b873]"></span></span>Roundrect frame, dotted</li>
                </ul>
            </div>
        </aside>

        <div class="flex-1 min-w-0 flex flex-col">
            <div class="flex-1 min-h-0 flex">
                <!-- Drawing canvas -->
                <div class="relative flex-1 overflow-hidden bg-[#b1c0bf] font-['Open_Sans',sans-serif] text-[9px]">
                    <div class="absolute left-[102px] top-[2px] w-[682px] h-[483px] bg-white border border-[#3a4040] border-b-2">
                        <div class="absolute left-[17px] top-[33px] w-[185px] h-[422px] bg-[#69738a]"></div>
                        <div class="absolute left-[87px] top-[226px] w-[109px] h-3 bg-[#b1d7fe]"></div>
                        <div class="absolute left-[21px] top-[238px] w-[175px] h-3 bg-[#b1d7fe]"></div>
                        <div class="absolute left-[21px] top-[249px] w-[116px] h-3 bg-[#b1d7fe]"></div>
                        <p class="absolute left-[21px] top-[228px] w-[176px] text-center leading-[11px] text-white">Corporate<br>Strategy/<br>Management</p>
                        <svg class="absolute left-[13px] top-[7px] w-[195px] h-[452px]" viewBox="0 0 195 452">
                            <rect x="4.500" y="26.500" width="184" height="422" fill="none" stroke="#fff" stroke-width="1.500"/>
                            <rect x="4.500" y="26.500" width="184" height="422" fill="none" stroke="#5cc95c" stroke-dasharray="6 3" stroke-width="1.500"/>
                            <path d="M96.500 8v17" stroke="#4fd04f" stroke-width="1.500"/>
                            <circle cx="96.500" cy="5" r="3.200" fill="#43b049" stroke="#268430"/>
                            <g fill="#2fae35" stroke="#1a7b20">
                                <rect x="2.500" y="24.500" width="5" height="5"/><rect x="94.500" y="24.500" width="5" height="5"/><rect x="186.500" y="24.500" width="5" height="5"/>
                                <rect x="2.500" y="234.500" width="5" height="5"/><rect x="186.500" y="234.500" width="5" height="5"/>
                                <rect x="2.500" y="445.500" width="5" height="5"/><rect x="94.500" y="445.500" width="5" height="5"/><rect x="186.500" y="445.500" width="5" height="5"/>
                            </g>
                            <path d="M4 26h2v2H4zM96 26h2v2h-2zM188 26h2v2h-2zM4 236h2v2H4zM188 236h2v2h-2zM4 447h2v2H4zM96 447h2v2h-2zM188 447h2v2h-2z" fill="#0d3a10"/>
                        </svg>
                        <div class="absolute left-[304px] top-[34px] w-[364px] h-[35px] bg-[#eeb25c] text-[#111] flex items-center justify-center">Customers</div>
                        <div class="absolute left-[304px] top-[111px] w-[364px] h-[35px] bg-[#eeb25c] text-[#111] flex items-center justify-center">Products (Services)</div>
                        <div class="absolute left-[304px] top-[188px] w-[364px] h-[35px] bg-[#eeb25c] text-[#111] flex items-center justify-center">Business Processes</div>
                        <div class="absolute left-[304px] top-[265px] w-[364px] h-[35px] bg-[#943034] text-white flex items-center justify-center">IT-Systems</div>
                        <div class="absolute left-[304px] top-[342px] w-[364px] h-[35px] bg-[#eeb25c] text-[#111] flex items-center justify-center">V-Model</div>
                        <div class="absolute left-[304px] top-[419px] w-[364px] h-[35px] bg-[#eeb25c] text-[#111] flex items-center justify-center">Resources</div>
                    </div>
                </div>
                <div class="w-[15px] bg-[#fafafa] pl-1 pb-[10px] pt-1"><div class="w-[7px] h-full rounded-full bg-[#c1c1c1]"></div></div>
            </div>

            <!-- Page bar -->
            <div class="h-[13px] shrink-0 flex bg-[#fafafa] border-t border-[#c4c9c9]">
                <button aria-label="Split view" class="w-[15px] border-r border-[#555] bg-[#e0e0e0] flex items-center justify-center gap-px"><span class="w-px h-[6px] bg-[#777]"></span><span class="w-px h-[6px] bg-[#777]"></span></button>
                <button aria-label="Previous page" class="w-[19px] flex items-center justify-center border-r border-[#e2e2e2]"><svg class="w-[6px] h-2" viewBox="0 0 6 8"><path d="M6 0L0 4l6 4z" fill="#b0b0b0"/></svg></button>
                <button aria-label="Next page" class="w-5 flex items-center justify-center border-r border-[#c4c4c4]"><svg class="w-[6px] h-2" viewBox="0 0 6 8"><path d="M0 0l6 4-6 4z" fill="#b0b0b0"/></svg></button>
                <div class="relative w-[82px] flex">
                    <select aria-label="Zoom level" class="appearance-none w-full h-3 pl-1 text-[9px] leading-3 bg-[#f4f4f4]"><option>Custom 60%</option></select>
                    <svg class="absolute right-1 top-[1px] w-[6px] h-[10px]" viewBox="0 0 6 10" fill="none" stroke="#333"><path d="M.5 3.500L3 1l2.500 2.500M.5 6.500L3 9l2.500-2.500"/></svg>
                </div>
                <div class="w-[38px] bg-[#9b9b9b] border-x border-[#777] flex items-center justify-center gap-[2px]">
                    <button aria-label="Page 1 layout" class="w-2 h-[9px] bg-[#f2f2f2] border border-[#777]"></button>
                    <button aria-label="Page 2 layout" class="w-2 h-[9px] bg-[#f2f2f2] border border-[#777]"></button>
                    <button aria-label="Page 3 layout" class="w-2 h-[9px] bg-[#f2f2f2] border border-[#777]"></button>
                </div>
                <div class="flex-1 flex items-center px-1"><div class="w-full h-[7px] rounded-full bg-[#bdbdbd]"></div></div>
                <button aria-label="Fit page" class="w-[13px] bg-[#dfe7f0] flex items-center justify-center"><svg class="w-3 h-[11px]" viewBox="0 0 12 11"><path d="M1 1h2M9 1h2M1 10h2M9 10h2M1 1v2M11 1v2M1 8v2M11 8v2" stroke="#44607f"/><path d="M6 1l2 2H4zM6 10L4 8h4zM1.500 5.500l2-2v4zM10.500 5.500l-2-2v4z" fill="#4a7dbc"/><rect x="4.500" y="4" width="3" height="3" fill="#cfe2f8" stroke="#4a7dbc"/></svg></button>
                <button aria-label="Fit object" class="w-[13px] bg-[#e6ecf3] flex items-center justify-center"><svg class="w-3 h-[11px]" viewBox="0 0 12 11"><path d="M1 1h2M9 1h2M1 10h2M9 10h2M1 1v2M11 1v2M1 8v2M11 8v2" stroke="#4a7dbc"/><rect x="4" y="2.500" width="4" height="6" rx="1" fill="#fff" stroke="#7e9cc0"/></svg></button>
            </div>
        </div>
    </main>

    <footer class="h-4 shrink-0 pl-2 text-[11px] leading-[13px] bg-[#ebebeb] border-b border-[#a8a8a8]">Ready</footer>

    <!-- Floating inspector -->
    <section class="absolute right-0 top-[88px] w-[207px] rounded-md bg-[#e3e3e3] text-[11px] leading-[13px] shadow-[0_2px_8px_rgba(0,0,0,0.45)] border-l border-[#b5b5b5]">
        <button class="w-full h-[14px] pl-[24px] flex items-center gap-[2px] rounded-t-md border-b border-[#aaa] bg-linear-to-b from-[#ececec] to-[#cfcfcf]"><svg class="w-[6px] h-2" viewBox="0 0 6 8"><path d="M0 0l6 4-6 4z" fill="#808080"/></svg>Behaviour</button>
        <button class="w-full h-[14px] pl-[24px] flex items-center gap-[2px] border-b border-[#aaa] bg-linear-to-b from-[#ececec] to-[#cfcfcf]"><svg class="w-[6px] h-2" viewBox="0 0 6 8"><path d="M0 0l6 4-6 4z" fill="#808080"/></svg>Information</button>
        <button class="w-full h-[13px] pl-[23px] flex items-center gap-[2px] bg-linear-to-b from-[#ececec] to-[#cfcfcf]"><svg class="w-[7px] h-[6px]" viewBox="0 0 7 6"><path d="M0 0h7L3.500 6z" fill="#707070"/></svg>Text</button>
        <div class="h-[29px] flex pl-[3px] bg-linear-to-b from-[#e3e3e3] to-[#cdcdcd] border-b border-[#adadad]">
            <button aria-label="Line" class="w-[27px] flex justify-center pt-[3px]"><svg class="w-[18px] h-[18px]" viewBox="0 0 18 18"><path d="M2 13h15l-1 3H1z" fill="#2f86d8"/><path d="M2 13.500c1-3 2-4.500 4.500-4.500l1.500 1.500C8 13 5 13.500 2 13.500z" fill="#3a3430"/><path d="M6.500 9l2-1.500L16 1l.5 1.500L9.500 10 8 11z" fill="#9a5a2c"/><path d="M6.500 9l2.500-2 1.500 2L8.500 11z" fill="#777"/></svg></button>
            <button aria-label="Fill" class="w-[27px] flex justify-center pt-[3px]"><svg class="w-[18px] h-[18px]" viewBox="0 0 18 18"><ellipse cx="11.500" cy="14" rx="6" ry="2.800" fill="#2f86d8"/><path d="M8 4c3-2 5 0 4.500 3v6h-2V8C10 6 9 6 8 6z" fill="#45a0e8"/><path d="M1.500 3.500l4-3 4 5-4.500 3.500z" fill="#b8bcc0" stroke="#5c6064"/><circle cx="5" cy="4" r="1.300" fill="#444"/></svg></button>
            <button aria-label="Shadow" class="w-[27px] flex justify-center pt-[3px]"><svg class="w-[18px] h-[18px]" viewBox="0 0 18 18"><rect x="5" y="4" width="11" height="10" rx="1" fill="#8db7e2"/><rect x="3" y="2" width="11" height="9.500" rx="1" fill="#d8d8d8" stroke="#777"/></svg></button>
            <button aria-label="Text" class="w-[27px] ml-[2px] bg-[#b5b5b5] rounded-t-sm font-['Liberation_Serif',serif] font-bold text-[18px] leading-[26px] text-[#1d5799]">A</button>
        </div>
        <div class="pl-2 pr-[7px] pt-[7px] pb-[3px] border-b border-[#a3a3a3] bg-[linear-gradient(#ebebeb_14px,#d2d2d2_14px,#d2d2d2_15px,#e3e3e3_15px)]">
            <div class="ml-[25px] w-[133px] h-[15px] flex rounded-sm bg-white overflow-hidden shadow-[0_0_1px_#888]">
                <button class="w-[53px] bg-linear-to-b from-[#6ab3fa] to-[#1f82f5] text-white">General</button>
                <button class="w-10 border-r border-[#ddd]">Tabs</button>
                <button class="flex-1">More</button>
            </div>
            <h2 class="mt-[11px] flex items-center gap-[10px] font-bold">Font<span class="flex-1 h-px bg-[#cdcdcd]"></span></h2>
            <div class="mt-[7px] flex items-center gap-2">
                <div class="relative w-[145px] h-[15px]">
                    <select aria-label="Font" class="appearance-none w-full h-full pl-[6px] rounded-sm bg-white text-[10px] leading-[15px] shadow-[0_0_1px_#777]"><option>Tahoma</option></select>
                    <span class="absolute right-0 top-0 w-3 h-[15px] rounded-r-sm bg-linear-to-b from-[#5eabfa] to-[#1c7ff3] flex items-center justify-center pointer-events-none"><svg class="w-[6px] h-[10px]" viewBox="0 0 6 10" fill="none" stroke="#fff" stroke-width="1.200"><path d="M.7 3.500L3 1.200l2.300 2.300M.7 6.500L3 8.800l2.300-2.300"/></svg></span>
                </div>
                <div class="relative w-9 h-[15px] flex bg-white outline-2 outline-[#8fbcf0]">
                    <input type="text" aria-label="Font size" value="12" class="w-[15px] h-[13px] ml-[2px] mt-px mr-[6px] pl-px bg-[#b3d5fb] text-[11px] outline-none">
                    <button aria-label="Font sizes" class="flex-1 bg-linear-to-b from-[#4b93ea] to-[#1d67cf] flex items-center justify-center"><svg class="w-[7px] h-[5px]" viewBox="0 0 7 5" fill="none" stroke="#fff" stroke-width="1.200"><path d="M.7 1l2.800 3 2.800-3"/></svg></button>
                    <ul role="listbox" aria-label="Font sizes" class="absolute left-0 top-[15px] w-[34px] bg-white leading-[16px] pb-[2px] shadow-[0_2px_4px_rgba(0,0,0,0.5)] text-[#333]">
                        <li role="option" class="pl-[3px] h-[15px]">10</li>
                        <li role="option" class="pl-[3px] h-4">11</li>
                        <li role="option" aria-selected="true" class="pl-[3px] h-[15px] bg-[#1167d8] text-white">12</li>
                        <li role="option" class="pl-[3px] h-4">14</li>
                        <li role="option" class="pl-[3px] h-[15px]">16</li>
                    </ul>
                </div>
            </div>
            <div class="mt-3 h-[17px] flex items-center">
                <button aria-label="Text colour" class="w-9 h-[17px] p-[3px] border border-[#b5b5b5] bg-[#ececec]"><span class="block h-full bg-white border border-[#999]"></span></button>
                <label for="op1" class="ml-[6px] w-[45px] text-[10px]">Opacity:</label>
                <input id="op1" type="range" value="100" class="w-[58px] h-3 appearance-none bg-[linear-gradient(#3b96f3,#3b96f3)] bg-[length:100%_2px] bg-center bg-no-repeat [&::-webkit-slider-thumb]:appearance-none [&::-webkit-slider-thumb]:w-[10px] [&::-webkit-slider-thumb]:h-[10px] [&::-webkit-slider-thumb]:rounded-full [&::-webkit-slider-thumb]:bg-white [&::-webkit-slider-thumb]:border [&::-webkit-slider-thumb]:border-[#c9c9c9]">
            </div>
            <div class="mt-[7px] h-[17px] flex items-center">
                <button aria-label="Highlight colour" class="w-9 h-[17px] p-[3px] border border-[#b5b5b5] bg-[#ececec]"><span class="block h-full bg-white border border-[#999]"></span></button>
                <label for="op2" class="ml-[6px] w-[45px] text-[10px]">Opacity:</label>
                <input id="op2" type="range" value="0" class="w-[58px] h-3 appearance-none bg-[linear-gradient(#b2b2b2,#b2b2b2)] bg-[length:100%_2px] bg-center bg-no-repeat [&::-webkit-slider-thumb]:appearance-none [&::-webkit-slider-thumb]:w-[10px] [&::-webkit-slider-thumb]:h-[10px] [&::-webkit-slider-thumb]:rounded-full [&::-webkit-slider-thumb]:bg-white [&::-webkit-slider-thumb]:border [&::-webkit-slider-thumb]:border-[#c9c9c9]">
            </div>
            <div class="mt-2 flex text-[10px] text-[#222]">
                <div class="w-[106px] flex flex-col">
                    <label class="h-4 flex items-center gap-1"><input type="checkbox" class="appearance-none w-[11px] h-[11px] rounded-xs bg-white border border-[#c6c6c6]">Bold</label>
                    <label class="h-[15px] flex items-center gap-1 text-[#b0b0b0]"><input type="checkbox" disabled class="appearance-none w-[11px] h-[11px] rounded-xs bg-[#ececec] border border-[#d0d0d0]">Italic</label>
                    <label class="h-4 flex items-center gap-1"><input type="checkbox" class="appearance-none w-[11px] h-[11px] rounded-xs bg-white border border-[#c6c6c6]">Underline</label>
                    <label class="h-[15px] flex items-center gap-1"><input type="checkbox" class="appearance-none w-[11px] h-[11px] rounded-xs bg-white border border-[#c6c6c6]">Strikethrough</label>
                </div>
                <div class="flex flex-col">
                    <label class="h-4 flex items-center gap-1"><input type="checkbox" class="appearance-none w-[11px] h-[11px] rounded-xs bg-white border border-[#c6c6c6]">Superscript</label>
                    <label class="h-[15px] flex items-center gap-1"><input type="checkbox" class="appearance-none w-[11px] h-[11px] rounded-xs bg-white border border-[#c6c6c6]">Subscript</label>
                </div>
            </div>
            <h2 class="mt-[6px] flex items-center gap-2 font-bold">Alignment<span class="flex-1 h-px bg-[#cdcdcd]"></span></h2>
            <div class="mt-[7px] flex gap-5">
                <div class="w-[82px] h-[15px] flex rounded-sm bg-white overflow-hidden shadow-[0_0_1px_#888]">
                    <button aria-label="Align left" class="flex-1 flex items-center justify-center"><svg class="w-3 h-2" viewBox="0 0 12 8" stroke="#555a80"><path d="M0 .5h12M0 2.500h8M0 4.500h12M0 6.500h8"/></svg></button>
                    <button aria-label="Align center" class="flex-1 flex items-center justify-center bg-linear-to-b from-[#6ab3fa] to-[#1f82f5]"><svg class="w-3 h-2" viewBox="0 0 12 8" stroke="#123a78"><path d="M0 .5h12M2 2.500h8M0 4.500h12M2 6.500h8"/></svg></button>
                    <button aria-label="Align right" class="flex-1 flex items-center justify-center"><svg class="w-3 h-2" viewBox="0 0 12 8" stroke="#555a80"><path d="M0 .5h12M4 2.500h8M0 4.500h12M4 6.500h8"/></svg></button>
                </div>
                <div class="w-[81px] h-[15px] flex rounded-sm bg-white overflow-hidden shadow-[0_0_1px_#888]">
                    <button aria-label="Align top" class="flex-1 flex items-start justify-center pt-px"><svg class="w-3 h-[5px]" viewBox="0 0 12 5" stroke="#555a80"><path d="M0 .5h12M2 2.500h8M0 4.500h12" /></svg></button>
                    <button aria-label="Align middle" class="flex-1 flex items-center justify-center bg-linear-to-b from-[#6ab3fa] to-[#1f82f5]"><svg class="w-3 h-[5px]" viewBox="0 0 12 5" stroke="#123a78"><path d="M0 .5h12M2 2.500h8M0 4.500h12"/></svg></button>
                    <button aria-label="Align bottom" class="flex-1 flex items-end justify-center pb-[2px]"><svg class="w-3 h-[5px]" viewBox="0 0 12 5" stroke="#555a80"><path d="M0 .5h12M2 2.500h8M0 4.500h12"/></svg></button>
                </div>
            </div>
            <label class="mt-3 pt-1 h-5 border-t border-[#c6c6c6] flex items-center gap-1 text-[10px] text-[#222]"><input type="checkbox" class="appearance-none w-[11px] h-[11px] rounded-xs bg-white border border-[#c6c6c6]">Text auto expand mode</label>
        </div>
        <button class="w-full h-[14px] pl-[24px] flex items-center gap-[2px] border-b border-[#aaa] bg-linear-to-b from-[#d4d4d4] to-[#cfcfcf]"><svg class="w-[6px] h-2" viewBox="0 0 6 8"><path d="M0 0l6 4-6 4z" fill="#808080"/></svg>Presentation Mode</button>
        <button class="w-full h-[14px] pl-[24px] flex items-center gap-[2px] rounded-b-md bg-linear-to-b from-[#ececec] to-[#cfcfcf]"><svg class="w-[6px] h-2" viewBox="0 0 6 8"><path d="M0 0l6 4-6 4z" fill="#808080"/></svg>Hypernote</button>
    </section>
</body>
</html>
